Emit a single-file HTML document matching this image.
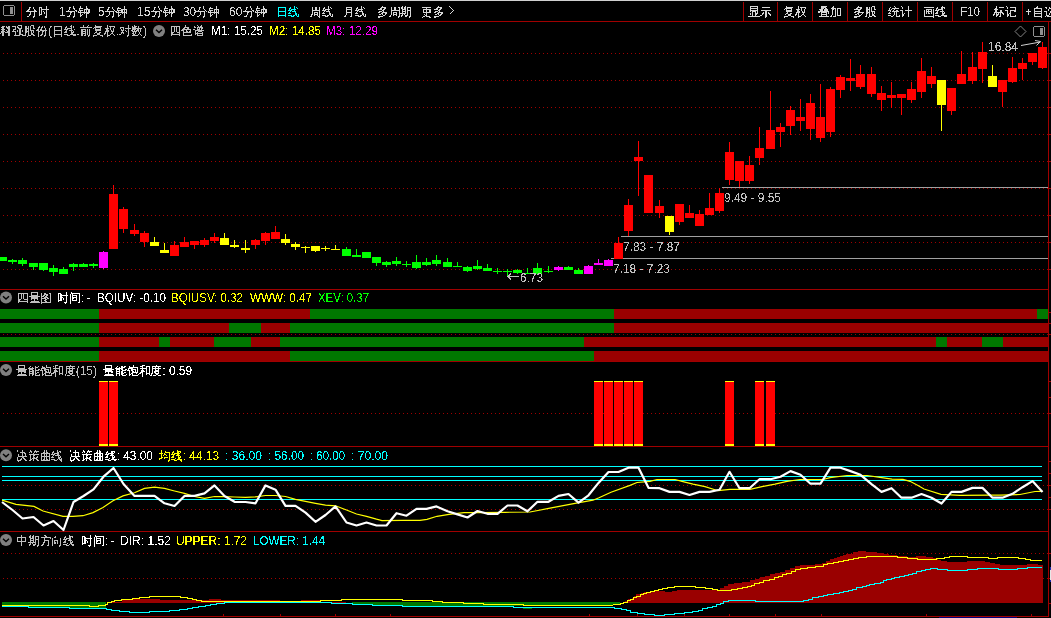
<!DOCTYPE html>
<html><head><meta charset="utf-8"><title>chart</title>
<style>
html,body{margin:0;padding:0;background:#000;width:1051px;height:618px;overflow:hidden;position:relative;font-family:"Liberation Sans",sans-serif;}
</style></head><body>
<svg width="1051" height="618" viewBox="0 0 1051 618" style="position:absolute;left:0;top:0;will-change:transform" font-family="Liberation Sans, sans-serif" shape-rendering="crispEdges">
<defs><filter id="pxc" filterUnits="userSpaceOnUse" x="0" y="0" width="1051" height="618" color-interpolation-filters="sRGB"><feComponentTransfer><feFuncA type="discrete" tableValues="0 0 1 1 1"/></feComponentTransfer></filter><filter id="pxl" filterUnits="userSpaceOnUse" x="0" y="0" width="1051" height="618" color-interpolation-filters="sRGB"><feComponentTransfer><feFuncA type="discrete" tableValues="0 0 0 0 0 0 0 0 0 0 1 1 1 1 1 1 1 1 1 1"/></feComponentTransfer></filter></defs>
<rect x="0" y="0" width="1051" height="618" fill="#000"/>
<rect x="0" y="0" width="1051" height="1" fill="#d0d0d0"/>
<rect x="0" y="21" width="1051" height="1" fill="#a00000"/>
<rect x="21" y="2" width="1" height="19" fill="#a00000"/>
<rect x="3.5" y="5.5" width="11" height="10" rx="2" fill="none" stroke="#909090" stroke-width="1"/>
<rect x="10" y="7" width="3" height="7" fill="#909090"/>
<text x="26.00" y="16" fill="#d8d8d8" font-size="12" textLength="23.00" lengthAdjust="spacingAndGlyphs" filter="url(#pxc)">分时</text>
<text x="59.00" y="16" fill="#d8d8d8" font-size="12" textLength="6.76" lengthAdjust="spacingAndGlyphs" filter="url(#pxl)">1</text>
<text x="65.76" y="16" fill="#d8d8d8" font-size="12" textLength="24.24" lengthAdjust="spacingAndGlyphs" filter="url(#pxc)">分钟</text>
<text x="98.00" y="16" fill="#d8d8d8" font-size="12" textLength="6.54" lengthAdjust="spacingAndGlyphs" filter="url(#pxl)">5</text>
<text x="104.54" y="16" fill="#d8d8d8" font-size="12" textLength="23.46" lengthAdjust="spacingAndGlyphs" filter="url(#pxc)">分钟</text>
<text x="137.00" y="16" fill="#d8d8d8" font-size="12" textLength="13.59" lengthAdjust="spacingAndGlyphs" filter="url(#pxl)">15</text>
<text x="150.59" y="16" fill="#d8d8d8" font-size="12" textLength="24.41" lengthAdjust="spacingAndGlyphs" filter="url(#pxc)">分钟</text>
<text x="183.00" y="16" fill="#d8d8d8" font-size="12" textLength="13.23" lengthAdjust="spacingAndGlyphs" filter="url(#pxl)">30</text>
<text x="196.23" y="16" fill="#d8d8d8" font-size="12" textLength="23.77" lengthAdjust="spacingAndGlyphs" filter="url(#pxc)">分钟</text>
<text x="229.00" y="16" fill="#d8d8d8" font-size="12" textLength="13.59" lengthAdjust="spacingAndGlyphs" filter="url(#pxl)">60</text>
<text x="242.59" y="16" fill="#d8d8d8" font-size="12" textLength="24.41" lengthAdjust="spacingAndGlyphs" filter="url(#pxc)">分钟</text>
<text x="276.00" y="16" fill="#00ffff" font-size="12" textLength="23.00" lengthAdjust="spacingAndGlyphs" filter="url(#pxc)">日线</text>
<text x="310.00" y="16" fill="#d8d8d8" font-size="12" textLength="23.00" lengthAdjust="spacingAndGlyphs" filter="url(#pxc)">周线</text>
<text x="343.00" y="16" fill="#d8d8d8" font-size="12" textLength="23.00" lengthAdjust="spacingAndGlyphs" filter="url(#pxc)">月线</text>
<text x="377.00" y="16" fill="#d8d8d8" font-size="12" textLength="35.00" lengthAdjust="spacingAndGlyphs" filter="url(#pxc)">多周期</text>
<text x="421.00" y="16" fill="#d8d8d8" font-size="12" textLength="23.00" lengthAdjust="spacingAndGlyphs" filter="url(#pxc)">更多</text>
<polyline points="449.5,6.5 453.5,10.5 449.5,14.5" fill="none" stroke="#d8d8d8" stroke-width="1"/>
<rect x="743" y="2" width="1" height="19" fill="#a00000"/>
<rect x="777" y="2" width="1" height="19" fill="#a00000"/>
<rect x="812" y="2" width="1" height="19" fill="#a00000"/>
<rect x="847" y="2" width="1" height="19" fill="#a00000"/>
<rect x="882" y="2" width="1" height="19" fill="#a00000"/>
<rect x="917" y="2" width="1" height="19" fill="#a00000"/>
<rect x="952" y="2" width="1" height="19" fill="#a00000"/>
<rect x="987" y="2" width="1" height="19" fill="#a00000"/>
<rect x="1022" y="2" width="1" height="19" fill="#a00000"/>
<text x="748.00" y="16" fill="#d8d8d8" font-size="12" textLength="24.00" lengthAdjust="spacingAndGlyphs" filter="url(#pxc)">显示</text>
<text x="783.00" y="16" fill="#d8d8d8" font-size="12" textLength="24.00" lengthAdjust="spacingAndGlyphs" filter="url(#pxc)">复权</text>
<text x="818.00" y="16" fill="#d8d8d8" font-size="12" textLength="24.00" lengthAdjust="spacingAndGlyphs" filter="url(#pxc)">叠加</text>
<text x="853.00" y="16" fill="#d8d8d8" font-size="12" textLength="24.00" lengthAdjust="spacingAndGlyphs" filter="url(#pxc)">多股</text>
<text x="888.00" y="16" fill="#d8d8d8" font-size="12" textLength="24.00" lengthAdjust="spacingAndGlyphs" filter="url(#pxc)">统计</text>
<text x="923.00" y="16" fill="#d8d8d8" font-size="12" textLength="24.00" lengthAdjust="spacingAndGlyphs" filter="url(#pxc)">画线</text>
<text x="993.00" y="16" fill="#d8d8d8" font-size="12" textLength="24.00" lengthAdjust="spacingAndGlyphs" filter="url(#pxc)">标记</text>
<text x="960.00" y="16" fill="#d8d8d8" font-size="12" textLength="20.00" lengthAdjust="spacingAndGlyphs" filter="url(#pxl)">F10</text>
<text x="1025.00" y="16" fill="#d8d8d8" font-size="12" textLength="7.02" lengthAdjust="spacingAndGlyphs" filter="url(#pxl)">+</text>
<text x="1032.02" y="16" fill="#d8d8d8" font-size="12" textLength="24.00" lengthAdjust="spacingAndGlyphs" filter="url(#pxc)">自选</text>
<text x="0.00" y="35" fill="#c0c0c0" font-size="12" textLength="48.11" lengthAdjust="spacingAndGlyphs" filter="url(#pxc)">科强股份</text>
<text x="48.11" y="35" fill="#c0c0c0" font-size="12" textLength="4.01" lengthAdjust="spacingAndGlyphs" filter="url(#pxl)">(</text>
<text x="52.12" y="35" fill="#c0c0c0" font-size="12" textLength="24.05" lengthAdjust="spacingAndGlyphs" filter="url(#pxc)">日线</text>
<text x="76.17" y="35" fill="#c0c0c0" font-size="12" textLength="3.35" lengthAdjust="spacingAndGlyphs" filter="url(#pxl)">.</text>
<text x="79.52" y="35" fill="#c0c0c0" font-size="12" textLength="36.08" lengthAdjust="spacingAndGlyphs" filter="url(#pxc)">前复权</text>
<text x="115.60" y="35" fill="#c0c0c0" font-size="12" textLength="3.35" lengthAdjust="spacingAndGlyphs" filter="url(#pxl)">.</text>
<text x="118.95" y="35" fill="#c0c0c0" font-size="12" textLength="24.05" lengthAdjust="spacingAndGlyphs" filter="url(#pxc)">对数</text>
<text x="143.01" y="35" fill="#c0c0c0" font-size="12" textLength="4.01" lengthAdjust="spacingAndGlyphs" filter="url(#pxl)">)</text>
<circle cx="159" cy="31" r="6" fill="#808080" shape-rendering="auto"/>
<polyline points="156,29.8 159,32.5 162,29.8" fill="none" stroke="#000" stroke-width="1.4" shape-rendering="auto"/>
<text x="170.00" y="35" fill="#c0c0c0" font-size="12" textLength="34.00" lengthAdjust="spacingAndGlyphs" filter="url(#pxc)">四色谱</text>
<text x="211.00" y="35" fill="#ffffff" font-size="12" textLength="52.00" lengthAdjust="spacingAndGlyphs" filter="url(#pxl)">M1: 15.25</text>
<text x="269.00" y="35" fill="#ffff00" font-size="12" textLength="52.00" lengthAdjust="spacingAndGlyphs" filter="url(#pxl)">M2: 14.85</text>
<text x="326.00" y="35" fill="#ff00ff" font-size="12" textLength="52.00" lengthAdjust="spacingAndGlyphs" filter="url(#pxl)">M3: 12.29</text>
<line x1="3" y1="53.5" x2="1048" y2="53.5" stroke="#a00000" stroke-width="1" stroke-dasharray="1 3"/>
<line x1="3" y1="80.5" x2="1048" y2="80.5" stroke="#a00000" stroke-width="1" stroke-dasharray="1 3"/>
<line x1="3" y1="107.5" x2="1048" y2="107.5" stroke="#a00000" stroke-width="1" stroke-dasharray="1 3"/>
<line x1="3" y1="134.5" x2="1048" y2="134.5" stroke="#a00000" stroke-width="1" stroke-dasharray="1 3"/>
<line x1="3" y1="161.5" x2="1048" y2="161.5" stroke="#a00000" stroke-width="1" stroke-dasharray="1 3"/>
<line x1="3" y1="188.5" x2="1048" y2="188.5" stroke="#a00000" stroke-width="1" stroke-dasharray="1 3"/>
<line x1="3" y1="215.5" x2="1048" y2="215.5" stroke="#a00000" stroke-width="1" stroke-dasharray="1 3"/>
<line x1="3" y1="242.5" x2="1048" y2="242.5" stroke="#a00000" stroke-width="1" stroke-dasharray="1 3"/>
<line x1="3" y1="269.5" x2="1048" y2="269.5" stroke="#a00000" stroke-width="1" stroke-dasharray="1 3"/>
<rect x="611" y="258" width="437" height="1" fill="#a0a0a0"/>
<rect x="621" y="236" width="427" height="1" fill="#a0a0a0"/>
<rect x="722" y="187" width="326" height="1" fill="#a0a0a0"/>
<rect x="2" y="257" width="1" height="4" fill="#00ff00"/>
<rect x="-2" y="257" width="9" height="4" fill="#00ff00"/>
<rect x="12" y="259" width="1" height="5" fill="#00ff00"/>
<rect x="8" y="260" width="9" height="2" fill="#00ff00"/>
<rect x="22" y="258" width="1" height="8" fill="#00ff00"/>
<rect x="18" y="260" width="9" height="4" fill="#00ff00"/>
<rect x="33" y="263" width="1" height="7" fill="#00ff00"/>
<rect x="29" y="263" width="9" height="4" fill="#00ff00"/>
<rect x="43" y="263" width="1" height="8" fill="#00ff00"/>
<rect x="39" y="263" width="9" height="7" fill="#00ff00"/>
<rect x="53" y="265" width="1" height="11" fill="#00ff00"/>
<rect x="49" y="268" width="9" height="4" fill="#00ff00"/>
<rect x="63" y="267" width="1" height="7" fill="#00ff00"/>
<rect x="59" y="269" width="9" height="5" fill="#00ff00"/>
<rect x="73" y="263" width="1" height="8" fill="#00ff00"/>
<rect x="69" y="264" width="9" height="3" fill="#00ff00"/>
<rect x="83" y="263" width="1" height="4" fill="#00ff00"/>
<rect x="79" y="264" width="9" height="3" fill="#00ff00"/>
<rect x="93" y="263" width="1" height="5" fill="#00ff00"/>
<rect x="89" y="264" width="9" height="2" fill="#00ff00"/>
<rect x="103" y="251" width="1" height="18" fill="#ff00ff"/>
<rect x="99" y="252" width="9" height="16" fill="#ff00ff"/>
<rect x="113" y="185" width="1" height="64" fill="#ff0000"/>
<rect x="109" y="194" width="9" height="55" fill="#ff0000"/>
<rect x="123" y="207" width="1" height="26" fill="#ff0000"/>
<rect x="119" y="209" width="9" height="20" fill="#ff0000"/>
<rect x="134" y="224" width="1" height="12" fill="#ff0000"/>
<rect x="130" y="230" width="9" height="4" fill="#ff0000"/>
<rect x="144" y="231" width="1" height="16" fill="#ff0000"/>
<rect x="140" y="233" width="9" height="9" fill="#ff0000"/>
<rect x="154" y="237" width="1" height="9" fill="#ffff00"/>
<rect x="150" y="242" width="9" height="4" fill="#ffff00"/>
<rect x="164" y="243" width="1" height="10" fill="#ffff00"/>
<rect x="160" y="250" width="9" height="3" fill="#ffff00"/>
<rect x="174" y="241" width="1" height="15" fill="#ff0000"/>
<rect x="170" y="245" width="9" height="11" fill="#ff0000"/>
<rect x="184" y="237" width="1" height="10" fill="#ff0000"/>
<rect x="180" y="242" width="9" height="5" fill="#ff0000"/>
<rect x="194" y="241" width="1" height="8" fill="#ff0000"/>
<rect x="190" y="241" width="9" height="4" fill="#ff0000"/>
<rect x="204" y="238" width="1" height="9" fill="#ff0000"/>
<rect x="200" y="240" width="9" height="5" fill="#ff0000"/>
<rect x="214" y="233" width="1" height="10" fill="#ff0000"/>
<rect x="210" y="237" width="9" height="4" fill="#ff0000"/>
<rect x="224" y="233" width="1" height="12" fill="#ffff00"/>
<rect x="220" y="238" width="9" height="7" fill="#ffff00"/>
<rect x="234" y="240" width="1" height="8" fill="#ffff00"/>
<rect x="230" y="245" width="9" height="2" fill="#ffff00"/>
<rect x="245" y="240" width="1" height="13" fill="#ffff00"/>
<rect x="241" y="248" width="9" height="2" fill="#ffff00"/>
<rect x="255" y="239" width="1" height="10" fill="#ff0000"/>
<rect x="251" y="240" width="9" height="5" fill="#ff0000"/>
<rect x="265" y="232" width="1" height="13" fill="#ff0000"/>
<rect x="261" y="233" width="9" height="8" fill="#ff0000"/>
<rect x="275" y="226" width="1" height="13" fill="#ff0000"/>
<rect x="271" y="232" width="9" height="7" fill="#ff0000"/>
<rect x="285" y="234" width="1" height="11" fill="#ffff00"/>
<rect x="281" y="239" width="9" height="4" fill="#ffff00"/>
<rect x="295" y="242" width="1" height="8" fill="#ffff00"/>
<rect x="291" y="244" width="9" height="3" fill="#ffff00"/>
<rect x="305" y="246" width="1" height="7" fill="#ffff00"/>
<rect x="301" y="247" width="9" height="1" fill="#ffff00"/>
<rect x="315" y="246" width="1" height="6" fill="#ffff00"/>
<rect x="311" y="246" width="9" height="5" fill="#ffff00"/>
<rect x="325" y="246" width="1" height="5" fill="#ffff00"/>
<rect x="321" y="248" width="9" height="1" fill="#ffff00"/>
<rect x="335" y="245" width="1" height="5" fill="#ffff00"/>
<rect x="331" y="249" width="9" height="1" fill="#ffff00"/>
<rect x="346" y="247" width="1" height="9" fill="#00ff00"/>
<rect x="342" y="249" width="9" height="7" fill="#00ff00"/>
<rect x="356" y="249" width="1" height="8" fill="#00ff00"/>
<rect x="352" y="255" width="9" height="2" fill="#00ff00"/>
<rect x="366" y="252" width="1" height="6" fill="#00ff00"/>
<rect x="362" y="252" width="9" height="6" fill="#00ff00"/>
<rect x="376" y="257" width="1" height="9" fill="#00ff00"/>
<rect x="372" y="257" width="9" height="6" fill="#00ff00"/>
<rect x="386" y="261" width="1" height="6" fill="#00ff00"/>
<rect x="382" y="262" width="9" height="3" fill="#00ff00"/>
<rect x="396" y="257" width="1" height="9" fill="#00ff00"/>
<rect x="392" y="261" width="9" height="3" fill="#00ff00"/>
<rect x="406" y="261" width="1" height="6" fill="#00ff00"/>
<rect x="402" y="264" width="9" height="1" fill="#00ff00"/>
<rect x="416" y="255" width="1" height="14" fill="#00ff00"/>
<rect x="412" y="262" width="9" height="6" fill="#00ff00"/>
<rect x="426" y="258" width="1" height="8" fill="#00ff00"/>
<rect x="422" y="262" width="9" height="3" fill="#00ff00"/>
<rect x="436" y="255" width="1" height="11" fill="#00ff00"/>
<rect x="432" y="260" width="9" height="4" fill="#00ff00"/>
<rect x="447" y="258" width="1" height="9" fill="#00ff00"/>
<rect x="443" y="262" width="9" height="5" fill="#00ff00"/>
<rect x="457" y="262" width="1" height="5" fill="#00ff00"/>
<rect x="453" y="266" width="9" height="1" fill="#00ff00"/>
<rect x="467" y="266" width="1" height="6" fill="#00ff00"/>
<rect x="463" y="267" width="9" height="4" fill="#00ff00"/>
<rect x="477" y="260" width="1" height="10" fill="#00ff00"/>
<rect x="473" y="266" width="9" height="3" fill="#00ff00"/>
<rect x="487" y="264" width="1" height="7" fill="#00ff00"/>
<rect x="483" y="268" width="9" height="3" fill="#00ff00"/>
<rect x="497" y="268" width="1" height="6" fill="#00ff00"/>
<rect x="493" y="271" width="9" height="1" fill="#00ff00"/>
<rect x="507" y="269" width="1" height="7" fill="#00ff00"/>
<rect x="503" y="271" width="9" height="1" fill="#00ff00"/>
<rect x="517" y="269" width="1" height="5" fill="#00ff00"/>
<rect x="513" y="270" width="9" height="3" fill="#00ff00"/>
<rect x="527" y="268" width="1" height="6" fill="#00ff00"/>
<rect x="523" y="273" width="9" height="1" fill="#00ff00"/>
<rect x="537" y="263" width="1" height="12" fill="#00ff00"/>
<rect x="533" y="268" width="9" height="6" fill="#00ff00"/>
<rect x="548" y="266" width="1" height="7" fill="#00ff00"/>
<rect x="544" y="271" width="9" height="1" fill="#00ff00"/>
<rect x="558" y="266" width="1" height="5" fill="#ff00ff"/>
<rect x="554" y="267" width="9" height="3" fill="#ff00ff"/>
<rect x="568" y="266" width="1" height="4" fill="#00ff00"/>
<rect x="564" y="267" width="9" height="3" fill="#00ff00"/>
<rect x="578" y="268" width="1" height="6" fill="#00ff00"/>
<rect x="574" y="270" width="9" height="4" fill="#00ff00"/>
<rect x="588" y="265" width="1" height="9" fill="#ff00ff"/>
<rect x="584" y="266" width="9" height="8" fill="#ff00ff"/>
<rect x="598" y="259" width="1" height="6" fill="#ff00ff"/>
<rect x="594" y="263" width="9" height="2" fill="#ff00ff"/>
<rect x="608" y="259" width="1" height="7" fill="#ff00ff"/>
<rect x="604" y="260" width="9" height="6" fill="#ff00ff"/>
<rect x="618" y="237" width="1" height="22" fill="#ff0000"/>
<rect x="614" y="243" width="9" height="16" fill="#ff0000"/>
<rect x="628" y="199" width="1" height="37" fill="#ff0000"/>
<rect x="624" y="205" width="9" height="26" fill="#ff0000"/>
<rect x="638" y="141" width="1" height="55" fill="#ff0000"/>
<rect x="634" y="157" width="9" height="4" fill="#ff0000"/>
<rect x="648" y="175" width="1" height="38" fill="#ff0000"/>
<rect x="644" y="175" width="9" height="38" fill="#ff0000"/>
<rect x="659" y="200" width="1" height="18" fill="#ff0000"/>
<rect x="655" y="206" width="9" height="7" fill="#ff0000"/>
<rect x="669" y="216" width="1" height="19" fill="#ffff00"/>
<rect x="665" y="216" width="9" height="16" fill="#ffff00"/>
<rect x="679" y="204" width="1" height="21" fill="#ff0000"/>
<rect x="675" y="204" width="9" height="18" fill="#ff0000"/>
<rect x="689" y="205" width="1" height="13" fill="#ff0000"/>
<rect x="685" y="213" width="9" height="5" fill="#ff0000"/>
<rect x="699" y="210" width="1" height="16" fill="#ff0000"/>
<rect x="695" y="214" width="9" height="12" fill="#ff0000"/>
<rect x="709" y="193" width="1" height="22" fill="#ff0000"/>
<rect x="705" y="208" width="9" height="7" fill="#ff0000"/>
<rect x="719" y="188" width="1" height="25" fill="#ff0000"/>
<rect x="715" y="193" width="9" height="18" fill="#ff0000"/>
<rect x="729" y="142" width="1" height="43" fill="#ff0000"/>
<rect x="725" y="152" width="9" height="28" fill="#ff0000"/>
<rect x="739" y="161" width="1" height="26" fill="#ff0000"/>
<rect x="735" y="161" width="9" height="20" fill="#ff0000"/>
<rect x="749" y="156" width="1" height="28" fill="#ff0000"/>
<rect x="745" y="165" width="9" height="16" fill="#ff0000"/>
<rect x="759" y="127" width="1" height="38" fill="#ff0000"/>
<rect x="755" y="148" width="9" height="10" fill="#ff0000"/>
<rect x="770" y="91" width="1" height="58" fill="#ff0000"/>
<rect x="766" y="130" width="9" height="19" fill="#ff0000"/>
<rect x="780" y="123" width="1" height="24" fill="#ff0000"/>
<rect x="776" y="127" width="9" height="5" fill="#ff0000"/>
<rect x="790" y="106" width="1" height="29" fill="#ff0000"/>
<rect x="786" y="110" width="9" height="16" fill="#ff0000"/>
<rect x="800" y="99" width="1" height="32" fill="#ff0000"/>
<rect x="796" y="117" width="9" height="4" fill="#ff0000"/>
<rect x="810" y="94" width="1" height="46" fill="#ff0000"/>
<rect x="806" y="103" width="9" height="26" fill="#ff0000"/>
<rect x="820" y="84" width="1" height="58" fill="#ff0000"/>
<rect x="816" y="117" width="9" height="21" fill="#ff0000"/>
<rect x="830" y="87" width="1" height="50" fill="#ff0000"/>
<rect x="826" y="89" width="9" height="43" fill="#ff0000"/>
<rect x="840" y="75" width="1" height="23" fill="#ff0000"/>
<rect x="836" y="77" width="9" height="13" fill="#ff0000"/>
<rect x="850" y="59" width="1" height="32" fill="#ff0000"/>
<rect x="846" y="78" width="9" height="3" fill="#ff0000"/>
<rect x="860" y="65" width="1" height="24" fill="#ff0000"/>
<rect x="856" y="74" width="9" height="13" fill="#ff0000"/>
<rect x="871" y="67" width="1" height="30" fill="#ff0000"/>
<rect x="867" y="74" width="9" height="20" fill="#ff0000"/>
<rect x="881" y="86" width="1" height="25" fill="#ff0000"/>
<rect x="877" y="93" width="9" height="7" fill="#ff0000"/>
<rect x="891" y="82" width="1" height="26" fill="#ff0000"/>
<rect x="887" y="95" width="9" height="3" fill="#ff0000"/>
<rect x="901" y="94" width="1" height="21" fill="#ff0000"/>
<rect x="897" y="94" width="9" height="4" fill="#ff0000"/>
<rect x="911" y="82" width="1" height="21" fill="#ff0000"/>
<rect x="907" y="89" width="9" height="11" fill="#ff0000"/>
<rect x="921" y="58" width="1" height="40" fill="#ff0000"/>
<rect x="917" y="71" width="9" height="21" fill="#ff0000"/>
<rect x="931" y="67" width="1" height="21" fill="#ff0000"/>
<rect x="927" y="76" width="9" height="8" fill="#ff0000"/>
<rect x="941" y="80" width="1" height="51" fill="#ffff00"/>
<rect x="937" y="80" width="9" height="25" fill="#ffff00"/>
<rect x="951" y="88" width="1" height="27" fill="#ff0000"/>
<rect x="947" y="88" width="9" height="23" fill="#ff0000"/>
<rect x="961" y="51" width="1" height="33" fill="#ff0000"/>
<rect x="957" y="74" width="9" height="10" fill="#ff0000"/>
<rect x="972" y="52" width="1" height="32" fill="#ff0000"/>
<rect x="968" y="67" width="9" height="14" fill="#ff0000"/>
<rect x="982" y="42" width="1" height="41" fill="#ff0000"/>
<rect x="978" y="52" width="9" height="17" fill="#ff0000"/>
<rect x="992" y="65" width="1" height="22" fill="#ffff00"/>
<rect x="988" y="76" width="9" height="11" fill="#ffff00"/>
<rect x="1002" y="80" width="1" height="27" fill="#ff0000"/>
<rect x="998" y="80" width="9" height="12" fill="#ff0000"/>
<rect x="1012" y="57" width="1" height="26" fill="#ff0000"/>
<rect x="1008" y="68" width="9" height="14" fill="#ff0000"/>
<rect x="1022" y="58" width="1" height="22" fill="#ff0000"/>
<rect x="1018" y="63" width="9" height="6" fill="#ff0000"/>
<rect x="1032" y="53" width="1" height="12" fill="#ff0000"/>
<rect x="1028" y="53" width="9" height="9" fill="#ff0000"/>
<rect x="1042" y="42" width="1" height="27" fill="#ff0000"/>
<rect x="1038" y="47" width="9" height="21" fill="#ff0000"/>
<text x="623.00" y="251" fill="#c0c0c0" font-size="12" textLength="57.00" lengthAdjust="spacingAndGlyphs" filter="url(#pxl)">7.83 - 7.87</text>
<text x="613.00" y="273" fill="#c0c0c0" font-size="12" textLength="57.00" lengthAdjust="spacingAndGlyphs" filter="url(#pxl)">7.18 - 7.23</text>
<text x="724.00" y="202" fill="#c0c0c0" font-size="12" textLength="57.00" lengthAdjust="spacingAndGlyphs" filter="url(#pxl)">9.49 - 9.55</text>
<line x1="508" y1="276.5" x2="519" y2="276.5" stroke="#c0c0c0" stroke-width="1"/>
<polyline points="511,273.5 508,276.5 511,279.5" fill="none" stroke="#c0c0c0" stroke-width="1"/>
<text x="520.00" y="282" fill="#c0c0c0" font-size="12" textLength="23.00" lengthAdjust="spacingAndGlyphs" filter="url(#pxl)">6.73</text>
<text x="988.00" y="51" fill="#c0c0c0" font-size="12" textLength="30.00" lengthAdjust="spacingAndGlyphs" filter="url(#pxl)">16.84</text>
<polyline points="1021,45.5 1040.5,42" fill="none" stroke="#d0d0d0" stroke-width="1" shape-rendering="auto"/>
<polyline points="1035,40.5 1040.5,41.5 1036.5,45.5" fill="none" stroke="#d0d0d0" stroke-width="1" shape-rendering="auto"/>
<polygon points="1020.5,26 1026,31.5 1020.5,37 1015,31.5" fill="none" stroke="#909090" stroke-width="0.9" shape-rendering="auto"/>
<rect x="1033.5" y="26.5" width="11" height="10" rx="2" fill="none" stroke="#909090" stroke-width="1"/>
<rect x="1040" y="28" width="3" height="7" fill="#909090"/>
<rect x="1048" y="21" width="1" height="596" fill="#a00000"/>
<rect x="1049" y="53" width="2" height="1" fill="#a00000"/>
<rect x="1049" y="80" width="2" height="1" fill="#a00000"/>
<rect x="1049" y="107" width="2" height="1" fill="#a00000"/>
<rect x="1049" y="134" width="2" height="1" fill="#a00000"/>
<rect x="1049" y="161" width="2" height="1" fill="#a00000"/>
<rect x="1049" y="188" width="2" height="1" fill="#a00000"/>
<rect x="1049" y="215" width="2" height="1" fill="#a00000"/>
<rect x="1049" y="242" width="2" height="1" fill="#a00000"/>
<rect x="1049" y="269" width="2" height="1" fill="#a00000"/>
<rect x="1049" y="312" width="2" height="1" fill="#a00000"/>
<rect x="1049" y="323" width="2" height="1" fill="#a00000"/>
<rect x="1049" y="334" width="2" height="1" fill="#a00000"/>
<rect x="1049" y="381" width="2" height="1" fill="#a00000"/>
<rect x="1049" y="397" width="2" height="1" fill="#a00000"/>
<rect x="1049" y="413" width="2" height="1" fill="#a00000"/>
<rect x="1049" y="461" width="2" height="1" fill="#a00000"/>
<rect x="1049" y="473" width="2" height="1" fill="#a00000"/>
<rect x="1049" y="485" width="2" height="1" fill="#a00000"/>
<rect x="1049" y="497" width="2" height="1" fill="#a00000"/>
<rect x="1049" y="509" width="2" height="1" fill="#a00000"/>
<rect x="1049" y="553" width="2" height="1" fill="#a00000"/>
<rect x="1049" y="578" width="2" height="1" fill="#a00000"/>
<rect x="1049" y="603" width="2" height="1" fill="#a00000"/>
<rect x="0" y="289" width="1049" height="1" fill="#a00000"/>
<rect x="0" y="361" width="1049" height="1" fill="#a00000"/>
<rect x="0" y="446" width="1049" height="1" fill="#a00000"/>
<rect x="0" y="531" width="1049" height="1" fill="#a00000"/>
<rect x="0" y="616" width="1049" height="1" fill="#a00000"/>
<circle cx="6" cy="297.5" r="6" fill="#808080" shape-rendering="auto"/>
<polyline points="3,296.3 6,299.0 9,296.3" fill="none" stroke="#000" stroke-width="1.4" shape-rendering="auto"/>
<text x="17.00" y="302" fill="#c0c0c0" font-size="12" textLength="35.00" lengthAdjust="spacingAndGlyphs" filter="url(#pxc)">四量图</text>
<text x="57.00" y="302" fill="#ffffff" font-size="12" textLength="23.53" lengthAdjust="spacingAndGlyphs" filter="url(#pxc)">时间</text>
<text x="80.53" y="302" fill="#ffffff" font-size="12" textLength="10.47" lengthAdjust="spacingAndGlyphs" filter="url(#pxl)">: -</text>
<text x="97.00" y="302" fill="#ffffff" font-size="12" textLength="69.00" lengthAdjust="spacingAndGlyphs" filter="url(#pxl)">BQIUV: -0.10</text>
<text x="171.00" y="302" fill="#ffff00" font-size="12" textLength="72.00" lengthAdjust="spacingAndGlyphs" filter="url(#pxl)">BQIUSV: 0.32</text>
<text x="250.00" y="302" fill="#ffff00" font-size="12" textLength="62.00" lengthAdjust="spacingAndGlyphs" filter="url(#pxl)">WWW: 0.47</text>
<text x="318.00" y="302" fill="#00ff00" font-size="12" textLength="51.00" lengthAdjust="spacingAndGlyphs" filter="url(#pxl)">XEV: 0.37</text>
<rect x="0" y="309" width="99" height="10" fill="#007800"/>
<rect x="99" y="309" width="211" height="10" fill="#9a0000"/>
<rect x="310" y="309" width="304" height="10" fill="#007800"/>
<rect x="614" y="309" width="423" height="10" fill="#9a0000"/>
<rect x="1037" y="309" width="11" height="10" fill="#007800"/>
<rect x="0" y="323" width="99" height="10" fill="#007800"/>
<rect x="99" y="323" width="130" height="10" fill="#9a0000"/>
<rect x="229" y="323" width="32" height="10" fill="#007800"/>
<rect x="261" y="323" width="29" height="10" fill="#9a0000"/>
<rect x="290" y="323" width="324" height="10" fill="#007800"/>
<rect x="614" y="323" width="434" height="10" fill="#9a0000"/>
<rect x="0" y="337" width="99" height="10" fill="#007800"/>
<rect x="99" y="337" width="60" height="10" fill="#9a0000"/>
<rect x="159" y="337" width="11" height="10" fill="#007800"/>
<rect x="170" y="337" width="44" height="10" fill="#9a0000"/>
<rect x="214" y="337" width="37" height="10" fill="#007800"/>
<rect x="251" y="337" width="29" height="10" fill="#9a0000"/>
<rect x="280" y="337" width="304" height="10" fill="#007800"/>
<rect x="584" y="337" width="352" height="10" fill="#9a0000"/>
<rect x="936" y="337" width="11" height="10" fill="#007800"/>
<rect x="947" y="337" width="35" height="10" fill="#9a0000"/>
<rect x="982" y="337" width="21" height="10" fill="#007800"/>
<rect x="1003" y="337" width="45" height="10" fill="#9a0000"/>
<rect x="0" y="351" width="99" height="10" fill="#007800"/>
<rect x="99" y="351" width="191" height="10" fill="#9a0000"/>
<rect x="290" y="351" width="304" height="10" fill="#007800"/>
<rect x="594" y="351" width="454" height="10" fill="#9a0000"/>
<line x1="3" y1="334.5" x2="1048" y2="334.5" stroke="#a00000" stroke-width="1" stroke-dasharray="1 3"/>
<circle cx="6" cy="370" r="6" fill="#808080" shape-rendering="auto"/>
<polyline points="3,368.8 6,371.5 9,368.8" fill="none" stroke="#000" stroke-width="1.4" shape-rendering="auto"/>
<text x="16.00" y="375" fill="#c0c0c0" font-size="12" textLength="59.75" lengthAdjust="spacingAndGlyphs" filter="url(#pxc)">量能饱和度</text>
<text x="75.75" y="375" fill="#c0c0c0" font-size="12" textLength="21.25" lengthAdjust="spacingAndGlyphs" filter="url(#pxl)">(15)</text>
<text x="103.00" y="375" fill="#ffffff" font-size="12" textLength="59.31" lengthAdjust="spacingAndGlyphs" filter="url(#pxc)">量能饱和度</text>
<text x="162.31" y="375" fill="#ffffff" font-size="12" textLength="29.69" lengthAdjust="spacingAndGlyphs" filter="url(#pxl)">: 0.59</text>
<line x1="3" y1="413.5" x2="1048" y2="413.5" stroke="#a00000" stroke-width="1" stroke-dasharray="1 3"/>
<rect x="99" y="381" width="9" height="65" fill="#ff0000"/>
<rect x="99" y="381" width="9" height="1" fill="#ffff00"/>
<rect x="99" y="444" width="9" height="2" fill="#ffff00"/>
<rect x="109" y="381" width="9" height="65" fill="#ff0000"/>
<rect x="109" y="381" width="9" height="1" fill="#ffff00"/>
<rect x="109" y="444" width="9" height="2" fill="#ffff00"/>
<rect x="594" y="381" width="9" height="65" fill="#ff0000"/>
<rect x="594" y="381" width="9" height="1" fill="#ffff00"/>
<rect x="594" y="444" width="9" height="2" fill="#ffff00"/>
<rect x="604" y="381" width="9" height="65" fill="#ff0000"/>
<rect x="604" y="381" width="9" height="1" fill="#ffff00"/>
<rect x="604" y="444" width="9" height="2" fill="#ffff00"/>
<rect x="614" y="381" width="9" height="65" fill="#ff0000"/>
<rect x="614" y="381" width="9" height="1" fill="#ffff00"/>
<rect x="614" y="444" width="9" height="2" fill="#ffff00"/>
<rect x="624" y="381" width="9" height="65" fill="#ff0000"/>
<rect x="624" y="381" width="9" height="1" fill="#ffff00"/>
<rect x="624" y="444" width="9" height="2" fill="#ffff00"/>
<rect x="634" y="381" width="9" height="65" fill="#ff0000"/>
<rect x="634" y="381" width="9" height="1" fill="#ffff00"/>
<rect x="634" y="444" width="9" height="2" fill="#ffff00"/>
<rect x="725" y="381" width="9" height="65" fill="#ff0000"/>
<rect x="725" y="381" width="9" height="1" fill="#ffff00"/>
<rect x="725" y="444" width="9" height="2" fill="#ffff00"/>
<rect x="755" y="381" width="9" height="65" fill="#ff0000"/>
<rect x="755" y="381" width="9" height="1" fill="#ffff00"/>
<rect x="755" y="444" width="9" height="2" fill="#ffff00"/>
<rect x="766" y="381" width="9" height="65" fill="#ff0000"/>
<rect x="766" y="381" width="9" height="1" fill="#ffff00"/>
<rect x="766" y="444" width="9" height="2" fill="#ffff00"/>
<circle cx="6" cy="455.3" r="6" fill="#808080" shape-rendering="auto"/>
<polyline points="3,454.1 6,456.8 9,454.1" fill="none" stroke="#000" stroke-width="1.4" shape-rendering="auto"/>
<text x="16.00" y="460" fill="#c0c0c0" font-size="12" textLength="47.00" lengthAdjust="spacingAndGlyphs" filter="url(#pxc)">决策曲线</text>
<text x="69.00" y="460" fill="#ffffff" font-size="12" textLength="47.60" lengthAdjust="spacingAndGlyphs" filter="url(#pxc)">决策曲线</text>
<text x="116.60" y="460" fill="#ffffff" font-size="12" textLength="36.40" lengthAdjust="spacingAndGlyphs" filter="url(#pxl)">: 43.00</text>
<text x="159.00" y="460" fill="#ffff00" font-size="12" textLength="23.72" lengthAdjust="spacingAndGlyphs" filter="url(#pxc)">均线</text>
<text x="182.72" y="460" fill="#ffff00" font-size="12" textLength="36.28" lengthAdjust="spacingAndGlyphs" filter="url(#pxl)">: 44.13</text>
<text x="225.00" y="460" fill="#00ffff" font-size="12" textLength="37.00" lengthAdjust="spacingAndGlyphs" filter="url(#pxl)">: 36.00</text>
<text x="268.00" y="460" fill="#00ffff" font-size="12" textLength="36.00" lengthAdjust="spacingAndGlyphs" filter="url(#pxl)">: 56.00</text>
<text x="310.00" y="460" fill="#00ffff" font-size="12" textLength="35.00" lengthAdjust="spacingAndGlyphs" filter="url(#pxl)">: 60.00</text>
<text x="351.00" y="460" fill="#00ffff" font-size="12" textLength="37.00" lengthAdjust="spacingAndGlyphs" filter="url(#pxl)">: 70.00</text>
<rect x="2" y="466" width="1040" height="1" fill="#00ffff"/>
<rect x="2" y="476" width="1040" height="1" fill="#00ffff"/>
<rect x="2" y="480" width="1040" height="1" fill="#00ffff"/>
<rect x="2" y="499" width="1040" height="1" fill="#00ffff"/>
<line x1="3" y1="485.5" x2="1048" y2="485.5" stroke="#a00000" stroke-width="1" stroke-dasharray="1 3"/>
<line x1="3" y1="509.5" x2="1048" y2="509.5" stroke="#a00000" stroke-width="1" stroke-dasharray="1 3"/>
<polyline points="2,500.2 16,504.3 34,506.4 43,511 63,516.3 73,516.3 83,515.7 93,512.6 103,507.6 113,500.8 123,495.9 134.5,492.8 144.5,488.4 154.5,487.2 164.5,488.4 174.5,491 184.5,493.4 194.5,496.5 204.5,498.3 214.5,496.5 224.5,496.7 234.5,497 245.5,497.4 255.5,496.9 265.5,495.5 275.5,495.5 285.5,496.5 295.5,499.3 305.5,501.4 315.5,503.3 325.5,505.1 335.5,505.8 346.5,510 356.5,514 366.5,516.3 376.5,519.2 382,520.6 402,520.4 420,520.4 427,519.4 437,516.3 449,514.4 464,512.6 480,512.6 505,512.3 530,512 550,508.2 575,503.3 593,500.2 599,497.7 611,492.2 630,485.4 637,482.5 650,481.3 657,479.5 675,479.5 682,481.3 693,484.1 705,486.6 718,490.7 730,489.4 750,489.4 762,486.6 775,484.1 787,481.3 800,479.5 823,479.5 830,477.6 847,475.5 867,475.5 880,477.3 892,479.2 903,479.4 910,481.3 918,485.4 924,489 941,494.4 960,495.3 990,495.1 1000,495.2 1020,494.5 1035,491.5 1042.5,491.3" fill="none" stroke="#ffff00" stroke-width="1.2" shape-rendering="auto"/>
<polyline points="2,502 12.5,510.0 22.5,518.5 33.5,517.0 43.5,525.5 53.5,521.0 63.5,530.0 73.5,502.0 83.5,496.0 93.5,489.4 103.5,476.7 113.5,468.0 123.5,484.0 134.5,495.9 144.5,495.9 154.5,495.9 164.5,503.3 174.5,506.0 184.5,495.9 194.5,495.9 204.5,493.4 214.5,485.4 224.5,496.0 234.5,501.8 245.5,502.0 255.5,503.3 265.5,485.4 275.5,489.7 285.5,505.8 295.5,505.8 305.5,512.6 315.5,521.8 325.5,515.0 335.5,506.4 346.5,522.5 356.5,525.5 366.5,522.5 376.5,525.5 386.5,525.5 396.5,513.2 406.5,515.7 416.5,508.9 426.5,508.9 436.5,506.4 447.5,511.3 457.5,514.4 467.5,517.5 477.5,511.0 487.5,513.8 497.5,513.8 507.5,505.5 517.5,505.5 527.5,511.3 537.5,501.8 548.5,501.8 558.5,495.9 568.5,494.0 578.5,502.7 588.5,495.3 598.5,482.9 608.5,472.0 618.5,472.0 628.5,467.7 638.5,467.7 648.5,487.8 659.5,488.2 669.5,491.9 679.5,491.9 689.5,495.0 699.5,491.9 709.5,491.9 719.5,489.7 729.5,471.8 739.5,488.2 749.5,488.2 759.5,479.2 770.5,479.2 780.5,476.7 790.5,471.1 800.5,474.8 810.5,483.7 820.5,483.7 830.5,467.7 840.5,467.7 850.5,471.1 860.5,474.8 871.5,484.1 881.5,491.9 891.5,488.2 901.5,497.7 911.5,497.7 921.5,494.0 931.5,497.7 941.5,503.5 951.5,491.9 961.5,491.9 972.5,487.9 982.5,487.9 992.5,497.7 1002.5,497.7 1012.5,493.8 1022.5,487.2 1032.5,481.1 1042.5,491.9" fill="none" stroke="#ffffff" stroke-width="2.2" stroke-linejoin="round" shape-rendering="auto"/>
<circle cx="6" cy="540" r="6" fill="#808080" shape-rendering="auto"/>
<polyline points="3,538.8 6,541.5 9,538.8" fill="none" stroke="#000" stroke-width="1.4" shape-rendering="auto"/>
<text x="16.00" y="545" fill="#c0c0c0" font-size="12" textLength="59.00" lengthAdjust="spacingAndGlyphs" filter="url(#pxc)">中期方向线</text>
<text x="81.00" y="545" fill="#ffffff" font-size="12" textLength="23.53" lengthAdjust="spacingAndGlyphs" filter="url(#pxc)">时间</text>
<text x="104.53" y="545" fill="#ffffff" font-size="12" textLength="10.47" lengthAdjust="spacingAndGlyphs" filter="url(#pxl)">: -</text>
<text x="120.00" y="545" fill="#ffffff" font-size="12" textLength="51.00" lengthAdjust="spacingAndGlyphs" filter="url(#pxl)">DIR: 1.52</text>
<text x="176.00" y="545" fill="#ffff00" font-size="12" textLength="71.00" lengthAdjust="spacingAndGlyphs" filter="url(#pxl)">UPPER: 1.72</text>
<text x="253.00" y="545" fill="#00ffff" font-size="12" textLength="72.00" lengthAdjust="spacingAndGlyphs" filter="url(#pxl)">LOWER: 1.44</text>
<line x1="3" y1="553.5" x2="1048" y2="553.5" stroke="#a00000" stroke-width="1" stroke-dasharray="1 3"/>
<line x1="3" y1="578.5" x2="1048" y2="578.5" stroke="#a00000" stroke-width="1" stroke-dasharray="1 3"/>
<polygon points="2,602 106,602 106,608.5 69,608.5 69,607.5 39,607.5 39,607 28,607 28,606.5 2,606.5" fill="#007800"/>
<polygon points="352,602 620,602 620,604 613,604 613,606 513,606 513,606.8 463,606.8 463,606.4 402,606.4 402,605.5 372,605.5 372,604.5 352,604.5" fill="#007800"/>
<polygon points="523,607.5 532,607.5 532,608.5 523,608.5" fill="#007800"/>
<polygon points="108,603 112,601.5 122,601.5 122,600.4 131,600.4 131,599 160,599 160,600 200,600 200,601 230,601 230,603" fill="#9a0000"/>
<rect x="209" y="599" width="12" height="1" fill="#9a0000"/>
<rect x="320" y="602" width="26" height="1" fill="#9a0000"/>
<rect x="201" y="600" width="79" height="1" fill="#9a0000"/>
<rect x="301" y="600" width="19" height="1" fill="#9a0000"/>
<polygon points="620,603 625,603 625,601 628,601 628,599 632,599 632,598 634,598 634,596 636,596 636,594 641,594 641,593 644,593 644,592 653,592 653,591 665,591 665,592 672,592 672,591 677,591 677,590 720,590 720,588 724,588 724,586 728,586 728,584 734,584 734,583 742,583 742,582 750,582 750,580 755,580 755,579 760,579 760,577 765,577 765,576 770,576 770,574 775,574 775,573 780,573 780,572 785,572 785,570 790,570 790,568 795,568 795,566 800,566 800,565 815,565 815,564 822,564 822,563 826,563 826,561 830,561 830,559 834,559 834,558 837,558 837,557 840,557 840,556 843,556 843,555 846,555 846,554 853,554 853,552 858,552 858,551 866,551 866,552 877,552 877,553 884,553 884,554 889,554 889,555 897,555 897,556 907,556 907,557 916,557 916,556 926,556 926,557 933,557 933,558 938,558 938,560 941,560 941,561 947,561 947,562 967,562 967,561 985,561 985,562 990,562 990,563 995,563 995,564 1000,564 1000,565 1027,565 1027,564 1038,564 1038,565 1043,565 1043,603 620,603" fill="#9a0000"/>
<polyline points="2,606.5 28,606.5 28,607.0 39,607.0 39,607.5 69,607.5 69,608.5 106,608.5 106,609.5 111,609.5 111,610.5 119,610.5 119,611.5 129,611.5 129,612.5 149,612.5 149,611.5 169,611.5 169,610.5 179,610.5 179,609.5 187,609.5 187,608.5 192,608.5 192,607.5 198,607.5 198,606.5 205,606.5 205,605.5 210,605.5 210,604.5 216,604.5 216,603.5 224,603.5 224,602.5 331,602.5 331,603.5 352,603.5 352,604.5 372,604.5 372,605.5 402,605.5 402,606.5 513,606.5 513,607.5 613,607.5" fill="none" stroke="#00ffff" stroke-width="1"/>
<polyline points="2,605.9 17,605.9 17,605.5 89,605.5 89,606.5 98,606.5 98,605.5 105,605.5 105,604.5 107,604.5 107,602.5 111,602.5 111,601.5 114,601.5 114,600.5 121,600.5 121,599.5 132,599.5 132,598.5 139,598.5 139,597.5 149,597.5 149,596.5 180,596.5 180,597.5 187,597.5 187,598.5 192,598.5 192,599.5 196,599.5 196,600.5 201,600.5 201,601.5 320,601.5 320,600.5 341,600.5 341,599.5 402,599.5 402,600.5 432,600.5 432,601.5 442,601.5 442,602.5 463,602.5 463,603.5 483,603.5 483,604.5 523,604.5 523,605.5 613,605.5" fill="none" stroke="#ffff00" stroke-width="1"/>
<polyline points="613,607.5 614,607.5 614,608.5 621,608.5 621,609.5 626,609.5 626,610.5 630,610.5 630,612.5 637,612.5 637,613.5 644,613.5 644,614.5 654,614.5 654,615.5 664,615.5 664,614.5 674,614.5 674,613.5 684,613.5 684,612.5 692,612.5 692,611.5 698,611.5 698,610.5 702,610.5 702,608.5 707,608.5 707,607.5 712,607.5 712,606.5 716,606.5 716,604.5 720,604.5 720,603.5 723,603.5 723,601.5 728,601.5 728,600.5 755,600.5 755,601.5 803,601.5 803,600.5 808,600.5 808,599.5 812,599.5 812,597.5 818,597.5 818,596.5 823,596.5 823,595.5 827,595.5 827,594.5 833,594.5 833,593.5 839,593.5 839,592.5 843,592.5 843,591.5 848,591.5 848,590.5 852,590.5 852,589.5 856,589.5 856,587.5 862,587.5 862,586.5 866,586.5 866,585.5 869,585.5 869,584.5 874,584.5 874,583.5 880,583.5 880,582.5 883,582.5 883,580.5 886,580.5 886,579.5 891,579.5 891,578.5 894,578.5 894,577.5 899,577.5 899,576.5 904,576.5 904,575.5 908,575.5 908,574.5 912,574.5 912,573.5 916,573.5 916,571.5 921,571.5 921,570.5 925,570.5 925,569.5 930,569.5 930,568.5 937,568.5 937,569.5 947,569.5 947,570.5 967,570.5 967,569.5 977,569.5 977,568.5 998,568.5 998,569.5 1017,569.5 1017,568.5 1027,568.5 1027,567.5 1042,567.5" fill="none" stroke="#00ffff" stroke-width="1"/>
<polyline points="613,604.5 620,604.5 620,603.5 623,603.5 623,602.5 627,602.5 627,600.5 630,600.5 630,599.5 633,599.5 633,597.5 636,597.5 636,596.5 640,596.5 640,594.5 643,594.5 643,593.5 646,593.5 646,592.5 650,592.5 650,591.5 654,591.5 654,590.5 658,590.5 658,589.5 662,589.5 662,588.5 667,588.5 667,587.5 674,587.5 674,586.5 695,586.5 695,587.5 705,587.5 705,588.5 712,588.5 712,589.5 717,589.5 717,590.5 731,590.5 731,589.5 737,589.5 737,588.5 742,588.5 742,587.5 747,587.5 747,586.5 751,586.5 751,585.5 754,585.5 754,583.5 759,583.5 759,582.5 763,582.5 763,580.5 769,580.5 769,579.5 774,579.5 774,577.5 778,577.5 778,576.5 782,576.5 782,574.5 786,574.5 786,573.5 791,573.5 791,571.5 795,571.5 795,569.5 800,569.5 800,568.5 807,568.5 807,567.5 815,567.5 815,566.5 823,566.5 823,564.5 827,564.5 827,563.5 833,563.5 833,562.5 838,562.5 838,561.5 843,561.5 843,560.5 848,560.5 848,559.5 853,559.5 853,558.5 858,558.5 858,557.5 866,557.5 866,556.5 897,556.5 897,557.5 907,557.5 907,558.5 917,558.5 917,559.5 936,559.5 936,558.5 944,558.5 944,557.5 949,557.5 949,556.5 967,556.5 967,557.5 988,557.5 988,558.5 997,558.5 997,557.5 1018,557.5 1018,558.5 1025,558.5 1025,559.5 1030,559.5 1030,560.5 1042,560.5" fill="none" stroke="#ffff00" stroke-width="1"/>
<rect x="939" y="617" width="78" height="1" fill="#000080"/>
<rect x="223" y="614" width="1" height="2" fill="#a00000"/>
<rect x="280" y="614" width="1" height="2" fill="#a00000"/>
<rect x="335" y="614" width="1" height="2" fill="#a00000"/>
<rect x="390" y="614" width="1" height="2" fill="#a00000"/>
<rect x="589" y="614" width="1" height="2" fill="#a00000"/>
<rect x="637" y="614" width="1" height="2" fill="#a00000"/>
<rect x="684" y="614" width="1" height="2" fill="#a00000"/>
<rect x="729" y="614" width="1" height="2" fill="#a00000"/>
<rect x="775" y="614" width="1" height="2" fill="#a00000"/>
<rect x="821" y="614" width="1" height="2" fill="#a00000"/>
<rect x="926" y="614" width="1" height="2" fill="#a00000"/>
<rect x="1031" y="614" width="1" height="2" fill="#a00000"/>
<rect x="1050" y="567" width="1" height="15" fill="#2030b0"/>
<rect x="1050" y="570" width="1" height="10" fill="#e8e8e8"/>
</svg>
</body></html>
